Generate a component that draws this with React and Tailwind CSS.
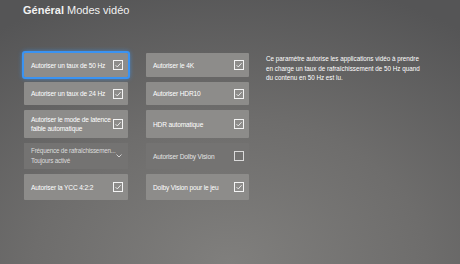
import React from 'react';

const font = { fontFamily: '"Liberation Sans", Arial, sans-serif' };

function Box({ checked = true, dim = false }) {
  return (
    <svg width="10" height="10" viewBox="0 0 10 10" className={`shrink-0 ${dim ? 'opacity-80' : ''}`}>
      <rect x="0.5" y="0.5" width="9" height="9" fill="none" stroke="#f4f4f4" strokeWidth="1" />
      {checked && <path d="M2.6 5.2 L4.3 6.9 L7.6 3.2" fill="none" stroke="#f4f4f4" strokeWidth="0.9" />}
    </svg>
  );
}

function Tile({ label, lines, checked = true, dark = false, focused = false }) {
  return (
    <div
      className={`flex items-center justify-between pl-[7px] pr-[5px] rounded-[1px] ${
        dark ? 'bg-[#747372]' : 'bg-[#8d8c8a]'
      } ${focused ? 'outline-2 outline-[#3a93f2] shadow-[0_0_5px_1px_#3a93f2]' : ''}`}
    >
      <div className={`whitespace-nowrap text-[6.6px] leading-[9px] tracking-[-0.15px] ${dark ? 'text-[#e4e4e4]' : 'text-white'}`}>
        {lines ? lines.map((l) => <div key={l}>{l}</div>) : label}
      </div>
      <Box checked={checked} dim={dark} />
    </div>
  );
}

export default function App() {
  return (
    <div
      style={font}
      className="w-[460px] h-[264px] overflow-hidden bg-[radial-gradient(ellipse_85%_110%_at_50%_100%,#807f7d_0%,#6e6d6c_50%,#555556_100%)]"
    >
      <div className="pl-[23px] pt-[3px] text-[11px] leading-[15px] text-[#f2f2f2]">
        <span className="font-bold">Général</span> <span>Modes vidéo</span>
      </div>

      <div className="flex mt-[35px] ml-[24px]">
        <div className="grid grid-cols-[104px_103px] grid-rows-[24px_23px_28px_26px_26px] gap-x-[18px] gap-y-[5px]">
          <Tile label="Autoriser un taux de 50 Hz" focused />
          <Tile label="Autoriser le 4K" />
          <Tile label="Autoriser un taux de 24 Hz" />
          <Tile label="Autoriser HDR10" />
          <Tile lines={['Autoriser le mode de latence', 'faible automatique']} />
          <Tile label="HDR automatique" />
          <div className="flex items-center justify-between pl-[7px] pr-[6px] bg-[#747372]">
            <div className="whitespace-nowrap text-[6.3px] leading-[10px] tracking-[-0.2px] text-[#dcdcdc]">
              <div>Fréquence de rafraîchissemen...</div>
              <div>Toujours activé</div>
            </div>
            <svg width="6" height="4" viewBox="0 0 6 4" className="shrink-0">
              <path d="M0.5 0.5 L3 3 L5.5 0.5" fill="none" stroke="#e8e8e8" strokeWidth="0.8" />
            </svg>
          </div>
          <Tile label="Autoriser Dolby Vision" checked={false} dark />
          <Tile label="Autoriser la YCC 4:2:2" />
          <Tile label="Dolby Vision pour le jeu" />
        </div>

        <div className="ml-[17px] mt-[1px] text-[6.3px] leading-[9.5px] text-white">
          <div>Ce paramètre autorise les applications vidéo à prendre</div>
          <div>en charge un taux de rafraîchissement de 50 Hz quand</div>
          <div>du contenu en 50 Hz est lu.</div>
        </div>
      </div>
    </div>
  );
}
